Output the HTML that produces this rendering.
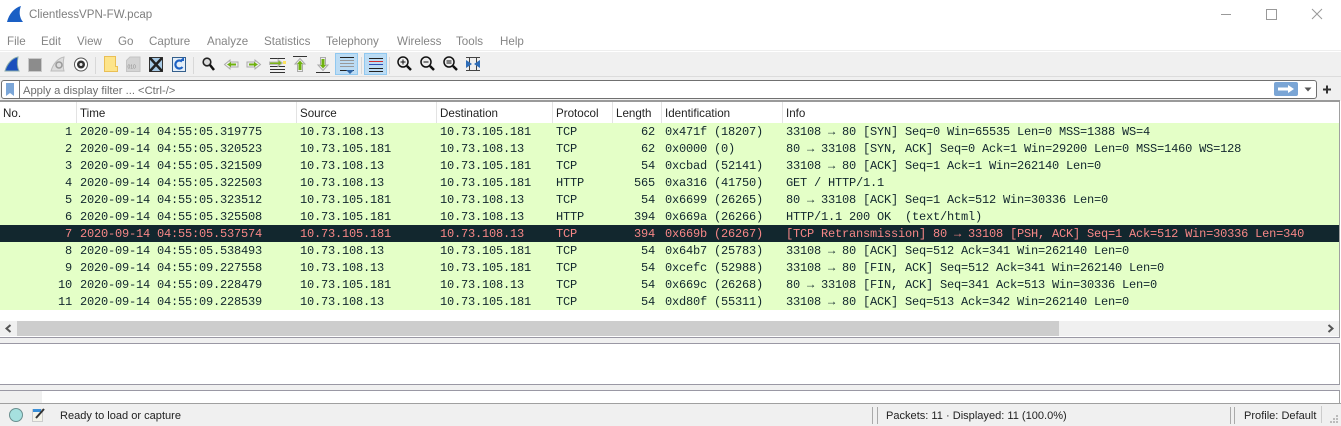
<!DOCTYPE html>
<html><head><meta charset="utf-8"><style>
html,body{margin:0;padding:0;width:1341px;height:426px;overflow:hidden;background:#fff}
body{position:relative;font-family:"Liberation Sans",sans-serif}
.a{position:absolute}
.m{position:absolute;top:35px;font-size:11.6px;line-height:14px;color:#858585;white-space:nowrap}
.h{position:absolute;top:107px;font-size:11.6px;line-height:14px;color:#222;white-space:nowrap}
.s{position:absolute;top:102px;width:1px;height:21px;background:#e3e3e3}
.r{position:absolute;left:0;width:1339px;height:17px;background:#e4ffc7;color:#12272e;font-family:"Liberation Mono",monospace;font-size:12px;letter-spacing:-.2px;line-height:18px;white-space:pre}
.r span{position:absolute;top:0}
.d{background:#12272e;color:#f78787}
.n{right:1267px;text-align:right}
.l{right:684px;text-align:right}
.t{left:80px}.c{left:300px}.e{left:440px}.p{left:556px}.i{left:665px}.f{left:786px}
.st{position:absolute;top:409px;font-size:11.05px;line-height:14px;color:#222;white-space:nowrap}
</style></head><body>
<svg class="a" style="left:6px;top:5px" width="18" height="18" viewBox="0 0 18 18"><path d="M1 17C3 9 8 3 15 1C13 6 13 12 17 17Z" fill="#1a5fc4"/></svg>
<div class="a" style="left:29px;top:8px;font-size:11.55px;line-height:15px;color:#7e7e7e">ClientlessVPN-FW.pcap</div>
<div class="a" style="left:1221px;top:14px;width:10px;height:1px;background:#999"></div>
<div class="a" style="left:1266px;top:9px;width:9px;height:9px;border:1px solid #999"></div>
<svg class="a" style="left:1311px;top:8px" width="12" height="12"><path d="M1 1L11 11M11 1L1 11" stroke="#999" fill="none"/></svg>
<span class="m" style="left:7px">File</span><span class="m" style="left:41px">Edit</span><span class="m" style="left:77px">View</span><span class="m" style="left:118px">Go</span><span class="m" style="left:149px">Capture</span><span class="m" style="left:207px">Analyze</span><span class="m" style="left:264px">Statistics</span><span class="m" style="left:326px">Telephony</span><span class="m" style="left:397px">Wireless</span><span class="m" style="left:456px">Tools</span><span class="m" style="left:500px">Help</span>
<div class="a" style="left:0;top:50px;width:1341px;height:1px;background:#eee"></div>
<div class="a" style="left:0;top:52px;width:1341px;height:49px;background:#f0f0f0"></div>
<div class="a" style="left:0;top:76px;width:1341px;height:1px;background:#dcdcdc"></div>
<svg class="a" style="left:0;top:52px" width="490" height="25" viewBox="0 0 490 25" fill="none">
<path d="M5 19C7 12 12 6 18 5C17 10 17 15 19 19Z" fill="#1a4fbc" stroke="#8aa"/>
<rect x="28.500" y="6.500" width="13" height="13" fill="#8c8c8c" stroke="#c9c9c9"/>
<path d="M51 19C53 12 58 6 64 5C63 10 63 15 64 19Z" fill="#ddd" stroke="#bbb"/><circle cx="59" cy="13" r="3" stroke="#999" stroke-width="1.500"/>
<circle cx="81" cy="12.500" r="6.500" fill="#fff" stroke="#555"/><circle cx="81" cy="12.500" r="4" fill="#333"/><circle cx="81" cy="12.500" r="1.500" fill="#eee"/>
<rect x="95" y="5" width="1" height="17" fill="#d8d8d8"/>
<path d="M104.500 4.500H115.500V14.500H117.500V19.500H104.500Z" fill="#fde48a" stroke="#eabf55"/>
<path d="M126.500 8.500L130 5H140V19.500H126.500Z" fill="#d4d4d4" stroke="#c4c4c4"/><text x="127.500" y="16.500" font-family="Liberation Sans" font-size="5" fill="#888">010</text>
<rect x="149.500" y="5.500" width="13" height="14" fill="#a9cbe6" stroke="#333"/><path d="M150 6L162 19M162 6L150 19" stroke="#222" stroke-width="2.500"/>
<rect x="172.500" y="5.500" width="13" height="14" fill="#e4eef8" stroke="#345f8c"/><path d="M182 9.500A4 4 0 1 0 182.500 15" stroke="#1d62c4" stroke-width="2.200"/><path d="M179 9H184V5Z" fill="#1d62c4"/>
<rect x="193" y="5" width="1" height="17" fill="#d8d8d8"/>
<circle cx="207" cy="10" r="3.800" fill="#ddd" stroke="#222" stroke-width="1.600"/><path d="M210 13L214 18" stroke="#111" stroke-width="2.500"/>
<path d="M224.500 12.500L230 8V10H238V15H230V17Z" fill="#eee" stroke="#aaa"/><path d="M227 12.500L231 10V11.500H236V13.500H231V15Z" fill="#6fb10f"/>
<path d="M260.500 12.500L255 8V10H247V15H255V17Z" fill="#eee" stroke="#aaa"/><path d="M258 12.500L254 10V11.500H249V13.500H254V15Z" fill="#6fb10f"/>
<path d="M270 6.500H285M270 14.500H285M270 17.500H285M270 20.500H285" stroke="#333"/><path d="M269.500 10H278V7.500L282.500 11L278 14.500V12.500H269.500Z" fill="#7cb518" stroke="#bbb"/><rect x="283" y="9" width="3" height="3" fill="#fde35f"/>
<path d="M293 4.500H307" stroke="#333"/><path d="M300 6.500L305 12H302.500V19.500H297.500V12H295Z" fill="#eee" stroke="#aaa"/><path d="M300 8.500L303 12H301.500V18H298.500V12H297Z" fill="#6fb10f"/>
<path d="M316 20.500H330" stroke="#333"/><path d="M323 18.500L328 13H325.500V5.500H320.500V13H318Z" fill="#eee" stroke="#aaa"/><path d="M323 16.500L326 13H324.500V7H321.500V13H320Z" fill="#6fb10f"/>
<rect x="335.500" y="1.500" width="22" height="21" fill="#bcdcf4" stroke="#90c8f0"/>
<path d="M340 8.500H354M340 11.500H354M340 14.500H354" stroke="#999"/><path d="M340 5.500H354M340 18.500H354" stroke="#222"/><path d="M346 18H354L350 22Z" fill="#2f66a8"/>
<rect x="361" y="5" width="1" height="17" fill="#d8d8d8"/>
<rect x="364.500" y="1.500" width="22" height="21" fill="#bcdcf4" stroke="#90c8f0"/>
<path d="M369 6.500H383M369 16.500H383M369 19.500H383" stroke="#222"/><path d="M369 9.500H383" stroke="#d32f2f"/><path d="M369 12.500H383" stroke="#2f4fb8"/>
<rect x="389" y="5" width="1" height="17" fill="#d8d8d8"/>
<g stroke="#111"><circle cx="403" cy="10" r="5" fill="#eee" stroke-width="1.500"/><path d="M407 14L411 18" stroke-width="2.500"/><path d="M400.500 10H405.500M403 7.500V12.500"/>
<circle cx="426" cy="10" r="5" fill="#eee" stroke-width="1.500"/><path d="M430 14L434 18" stroke-width="2.500"/><path d="M423.500 10H428.500"/>
<circle cx="449" cy="10" r="5" fill="#eee" stroke-width="1.500"/><path d="M453 14L457 18" stroke-width="2.500"/><path d="M446.500 9H451.500M446.500 11H451.500"/></g>
<path d="M466 5.500H480M466 18.500H480M469.500 5V19M476.500 5V19" stroke="#444"/><path d="M466 8L472 12L466 16ZM480 8L474 12L480 16Z" fill="#2f6db8"/>
</svg>
<div class="a" style="left:1px;top:80px;width:1314px;height:17px;background:#fff;border:1px solid #707070;border-radius:3px"></div>
<svg class="a" style="left:2px;top:81px" width="18" height="17"><path d="M17.500 0V17" stroke="#777"/><path d="M4 2H12V15L8 12L4 15Z" fill="#7ba6d8"/></svg>
<div class="a" style="left:23px;top:84px;font-size:11.2px;line-height:14px;color:#6d6d6d">Apply a display filter ... &lt;Ctrl-/&gt;</div>
<svg class="a" style="left:1274px;top:82px" width="60" height="16"><rect width="24" height="14" rx="2" fill="#7aa5d5"/><path d="M4 5.500H14V3L20 7L14 11V8.500H4Z" fill="#fff"/><path d="M30.500 5.500H37.500L34 9.500Z" fill="#555"/><path d="M49 7.500H57M53 3.500V11.500" stroke="#333" stroke-width="2"/></svg>
<div class="a" style="left:0;top:100px;width:1340px;height:2px;background:#9a9a9a"></div>
<div class="a" style="left:1339px;top:102px;width:1px;height:301px;background:#a0a0a0"></div>
<div class="h" style="left:3px">No.</div><div class="h" style="left:80px">Time</div><div class="h" style="left:300px">Source</div><div class="h" style="left:440px">Destination</div><div class="h" style="left:556px">Protocol</div><div class="h" style="left:616px">Length</div><div class="h" style="left:665px">Identification</div><div class="h" style="left:786px">Info</div>
<div class="s" style="left:76px"></div><div class="s" style="left:296px"></div><div class="s" style="left:436px"></div><div class="s" style="left:552px"></div><div class="s" style="left:612px"></div><div class="s" style="left:661px"></div><div class="s" style="left:782px"></div>
<div class="r" style="top:123px"><span class="n">1</span><span class="t">2020-09-14 04:55:05.319775</span><span class="c">10.73.108.13</span><span class="e">10.73.105.181</span><span class="p">TCP</span><span class="l">62</span><span class="i">0x471f (18207)</span><span class="f">33108 → 80 [SYN] Seq=0 Win=65535 Len=0 MSS=1388 WS=4</span></div>
<div class="r" style="top:140px"><span class="n">2</span><span class="t">2020-09-14 04:55:05.320523</span><span class="c">10.73.105.181</span><span class="e">10.73.108.13</span><span class="p">TCP</span><span class="l">62</span><span class="i">0x0000 (0)</span><span class="f">80 → 33108 [SYN, ACK] Seq=0 Ack=1 Win=29200 Len=0 MSS=1460 WS=128</span></div>
<div class="r" style="top:157px"><span class="n">3</span><span class="t">2020-09-14 04:55:05.321509</span><span class="c">10.73.108.13</span><span class="e">10.73.105.181</span><span class="p">TCP</span><span class="l">54</span><span class="i">0xcbad (52141)</span><span class="f">33108 → 80 [ACK] Seq=1 Ack=1 Win=262140 Len=0</span></div>
<div class="r" style="top:174px"><span class="n">4</span><span class="t">2020-09-14 04:55:05.322503</span><span class="c">10.73.108.13</span><span class="e">10.73.105.181</span><span class="p">HTTP</span><span class="l">565</span><span class="i">0xa316 (41750)</span><span class="f">GET / HTTP/1.1</span></div>
<div class="r" style="top:191px"><span class="n">5</span><span class="t">2020-09-14 04:55:05.323512</span><span class="c">10.73.105.181</span><span class="e">10.73.108.13</span><span class="p">TCP</span><span class="l">54</span><span class="i">0x6699 (26265)</span><span class="f">80 → 33108 [ACK] Seq=1 Ack=512 Win=30336 Len=0</span></div>
<div class="r" style="top:208px"><span class="n">6</span><span class="t">2020-09-14 04:55:05.325508</span><span class="c">10.73.105.181</span><span class="e">10.73.108.13</span><span class="p">HTTP</span><span class="l">394</span><span class="i">0x669a (26266)</span><span class="f">HTTP/1.1 200 OK  (text/html)</span></div>
<div class="r d" style="top:225px"><span class="n">7</span><span class="t">2020-09-14 04:55:05.537574</span><span class="c">10.73.105.181</span><span class="e">10.73.108.13</span><span class="p">TCP</span><span class="l">394</span><span class="i">0x669b (26267)</span><span class="f">[TCP Retransmission] 80 → 33108 [PSH, ACK] Seq=1 Ack=512 Win=30336 Len=340</span></div>
<div class="r" style="top:242px"><span class="n">8</span><span class="t">2020-09-14 04:55:05.538493</span><span class="c">10.73.108.13</span><span class="e">10.73.105.181</span><span class="p">TCP</span><span class="l">54</span><span class="i">0x64b7 (25783)</span><span class="f">33108 → 80 [ACK] Seq=512 Ack=341 Win=262140 Len=0</span></div>
<div class="r" style="top:259px"><span class="n">9</span><span class="t">2020-09-14 04:55:09.227558</span><span class="c">10.73.108.13</span><span class="e">10.73.105.181</span><span class="p">TCP</span><span class="l">54</span><span class="i">0xcefc (52988)</span><span class="f">33108 → 80 [FIN, ACK] Seq=512 Ack=341 Win=262140 Len=0</span></div>
<div class="r" style="top:276px"><span class="n">10</span><span class="t">2020-09-14 04:55:09.228479</span><span class="c">10.73.105.181</span><span class="e">10.73.108.13</span><span class="p">TCP</span><span class="l">54</span><span class="i">0x669c (26268)</span><span class="f">80 → 33108 [FIN, ACK] Seq=341 Ack=513 Win=30336 Len=0</span></div>
<div class="r" style="top:293px"><span class="n">11</span><span class="t">2020-09-14 04:55:09.228539</span><span class="c">10.73.108.13</span><span class="e">10.73.105.181</span><span class="p">TCP</span><span class="l">54</span><span class="i">0xd80f (55311)</span><span class="f">33108 → 80 [ACK] Seq=513 Ack=342 Win=262140 Len=0</span></div>
<div class="a" style="left:0;top:321px;width:1339px;height:15px;background:#f0f0f0"></div>
<div class="a" style="left:17px;top:321px;width:1042px;height:15px;background:#cdcdcd"></div>
<svg class="a" style="left:0;top:321px" width="1339" height="15" fill="none" stroke="#555" stroke-width="2"><path d="M10.500 4L6.500 7.500L10.500 11M1328.500 4L1332.500 7.500L1328.500 11"/></svg>
<div class="a" style="left:0;top:337px;width:1340px;height:6px;background:#f0f0f0"></div>
<div class="a" style="left:0;top:337px;width:1340px;height:1px;background:#9a98a4"></div>
<div class="a" style="left:0;top:343px;width:1340px;height:1px;background:#9a98a4"></div>
<div class="a" style="left:0;top:384px;width:1340px;height:1px;background:#9a98a4"></div>
<div class="a" style="left:0;top:385px;width:1340px;height:5px;background:#f0f0f0"></div>
<div class="a" style="left:0;top:390px;width:1340px;height:1px;background:#9a98a4"></div>
<div class="a" style="left:0;top:391px;width:42px;height:12px;background:#f0f0f0"></div>
<div class="a" style="left:0;top:403px;width:1341px;height:1px;background:#a0a0a0"></div>
<div class="a" style="left:0;top:404px;width:1341px;height:22px;background:#f0f0f0"></div>
<svg class="a" style="left:8px;top:407px" width="40" height="18" fill="none"><circle cx="8" cy="8" r="6.500" fill="#a6e0df" stroke="#6a8f8f"/><rect x="24.500" y="2.500" width="10" height="12" fill="#f4f4ea" stroke="#ccc"/><rect x="25" y="2" width="8" height="3" fill="#3a8fd8"/><path d="M28 11L36 2" stroke="#333" stroke-width="2"/></svg>
<div class="st" style="left:60px">Ready to load or capture</div>
<div class="a" style="left:872px;top:407px;width:1px;height:17px;background:#aaa"></div><div class="a" style="left:877px;top:407px;width:1px;height:17px;background:#aaa"></div>
<div class="st" style="left:886px">Packets: 11 · Displayed: 11 (100.0%)</div>
<div class="a" style="left:1230px;top:407px;width:1px;height:17px;background:#aaa"></div><div class="a" style="left:1234px;top:407px;width:1px;height:17px;background:#aaa"></div>
<div class="st" style="left:1244px">Profile: Default</div>
<div class="a" style="left:1321px;top:406px;width:1px;height:17px;background:#ccc"></div>
<svg class="a" style="left:1329px;top:414px" width="11" height="11" fill="#bbb"><rect x="7" y="1" width="2" height="2"/><rect x="4" y="4" width="2" height="2"/><rect x="7" y="4" width="2" height="2"/><rect x="1" y="7" width="2" height="2"/><rect x="4" y="7" width="2" height="2"/><rect x="7" y="7" width="2" height="2"/></svg>
</body></html>
